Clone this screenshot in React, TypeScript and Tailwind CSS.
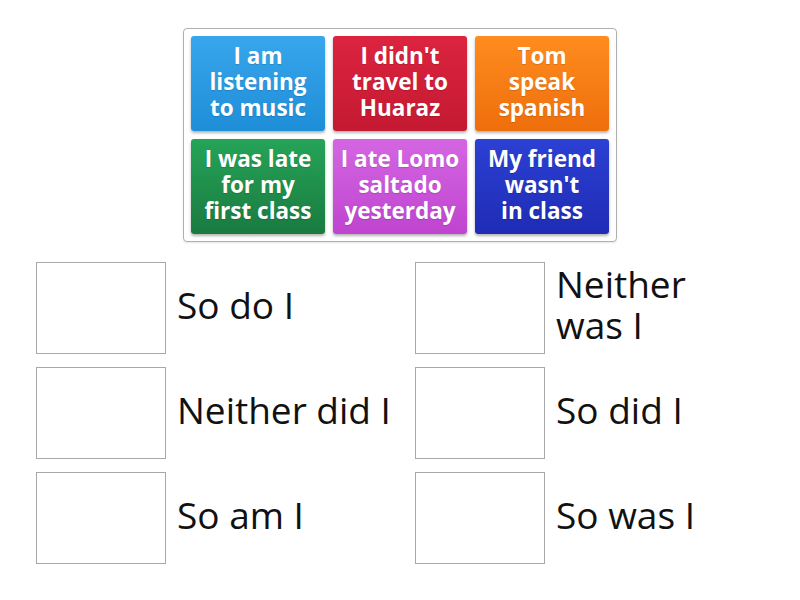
import React from "react";

const tiles = [
  { t: ["I am", "listening", "to music"], c: "bg-[linear-gradient(#38a6ec,#1e8ed8)]" },
  { t: ["I didn't", "travel to", "Huaraz"], c: "bg-[linear-gradient(#dc243f,#c41932)]" },
  { t: ["Tom", "speak", "spanish"], c: "bg-[linear-gradient(#ff8c1f,#ee6e0c)]" },
  { t: ["I was late", "for my", "first class"], c: "bg-[linear-gradient(#25a458,#1a7a40)]" },
  { t: ["I ate Lomo", "saltado", "yesterday"], c: "bg-[linear-gradient(#d466e2,#bf44d0)]" },
  { t: ["My friend", "wasn't", "in class"], c: "bg-[linear-gradient(#2c40d4,#1f2cb4)]" },
];

const answers: React.ReactNode[] = [
  "So do I",
  <>Neither<br />was I</>,
  "Neither did I",
  "So did I",
  "So am I",
  "So was I",
];

export default function App() {
  return (
    <div className="w-[800px] h-[600px] bg-white font-['Open_Sans',sans-serif] overflow-hidden">
      <div className="pt-[28px] flex justify-center">
        <div className="border border-[#b0b0b0] rounded-[4px] p-[7px] grid grid-cols-[134px_134px_134px] gap-[8px] shadow-[0_1px_2px_rgba(0,0,0,0.1)]">
          {tiles.map((x, i) => (
            <div
              key={i}
              className={`${x.c} h-[95px] rounded-[3px] shadow-[0_2px_3px_rgba(0,0,0,0.3)] flex flex-col items-center justify-center text-center text-white font-bold text-[22.5px] leading-[26px] pb-[3px] whitespace-nowrap [text-shadow:0_1px_1px_rgba(0,0,0,0.15)]`}
            >
              {x.t.map((l, j) => (
                <div key={j}>{l}</div>
              ))}
            </div>
          ))}
        </div>
      </div>
      <div className="mt-[20px] pl-[36px] grid grid-cols-[379px_379px] gap-y-[13px]">
        {answers.map((a, i) => (
          <div key={i} className="flex items-center gap-[11px]">
            <div className="w-[130px] h-[92px] border border-[#a8a8a8] bg-white shrink-0" />
            <div className="text-[37px] leading-[41px] text-[#111] pb-[8px]">{a}</div>
          </div>
        ))}
      </div>
    </div>
  );
}
